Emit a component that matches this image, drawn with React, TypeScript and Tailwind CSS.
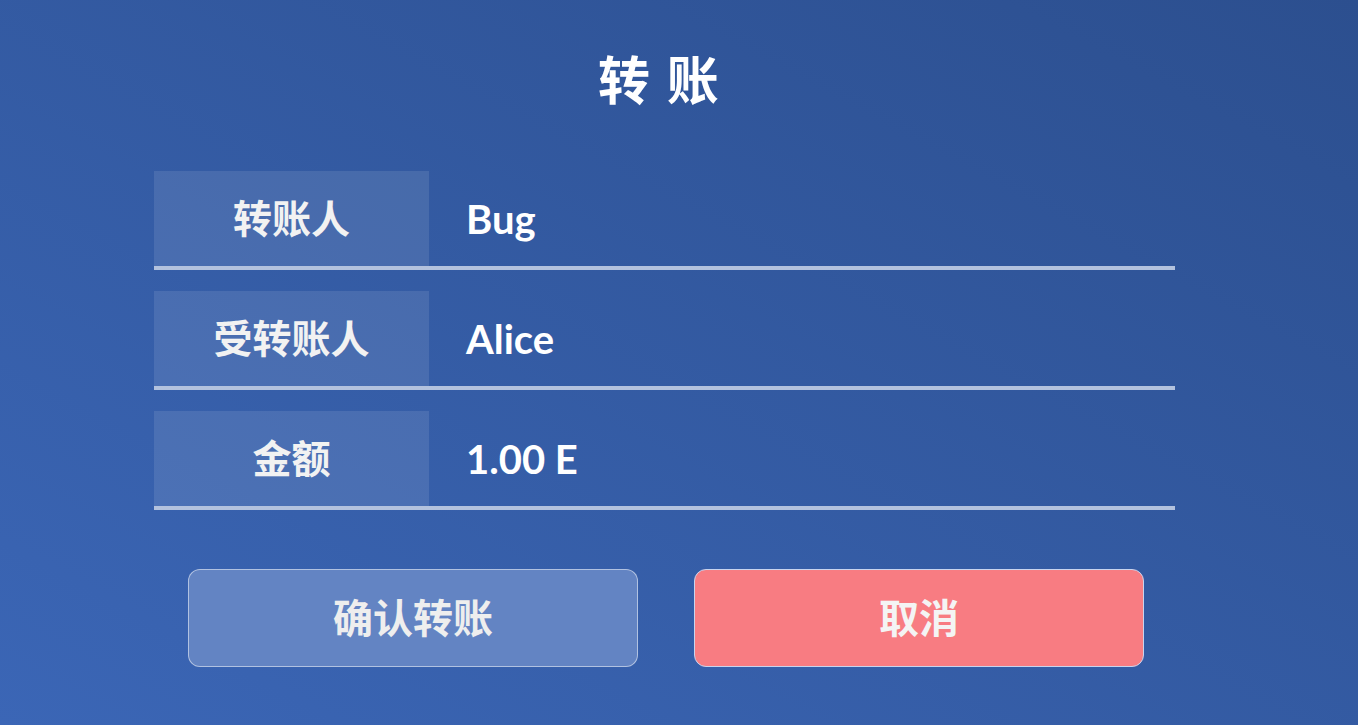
import React from "react";

const font = { fontFamily: 'Lato, "Noto Sans CJK SC", sans-serif' };

function Row({ label, value }: { label: string; value: string }) {
  return (
    <div className="flex h-[99px] border-b-4 border-[#b3c2de]">
      <div className="w-[275px] h-[95px] bg-[#ffffff]/10 flex items-center justify-center text-[39px] font-bold text-[#f2f2f2]">
        {label}
      </div>
      <div className="flex items-center pl-[37px] text-[40px] font-bold text-white">{value}</div>
    </div>
  );
}

export default function App() {
  return (
    <div
      className="w-[1358px] h-[725px] overflow-hidden bg-gradient-to-tr from-[#3b66b6] to-[#2c4f8f]"
      style={font}
    >
      <div className="ml-[154px] w-[1021px] flex flex-col">
        <div className="h-[171px] flex items-center justify-center pb-[12px] pr-[10px] text-[52px] font-bold text-white tracking-[0.04em]">
          转 账
        </div>
        <div className="flex flex-col gap-[21px]">
          <Row label="转账人" value="Bug" />
          <Row label="受转账人" value="Alice" />
          <Row label="金额" value="1.00 E" />
        </div>
        <div className="flex gap-[56px] pl-[34px] mt-[59px]">
          <button className="w-[450px] h-[98px] rounded-[12px] border border-[#ffffff]/50 bg-[#6384c3] text-[40px] font-bold text-[#eeeeee]">
            确认转账
          </button>
          <button className="w-[450px] h-[98px] rounded-[12px] border border-[#c8d4ee] bg-[#f87c82] text-[40px] font-bold text-[#f4f4f4]">
            取消
          </button>
        </div>
      </div>
    </div>
  );
}
